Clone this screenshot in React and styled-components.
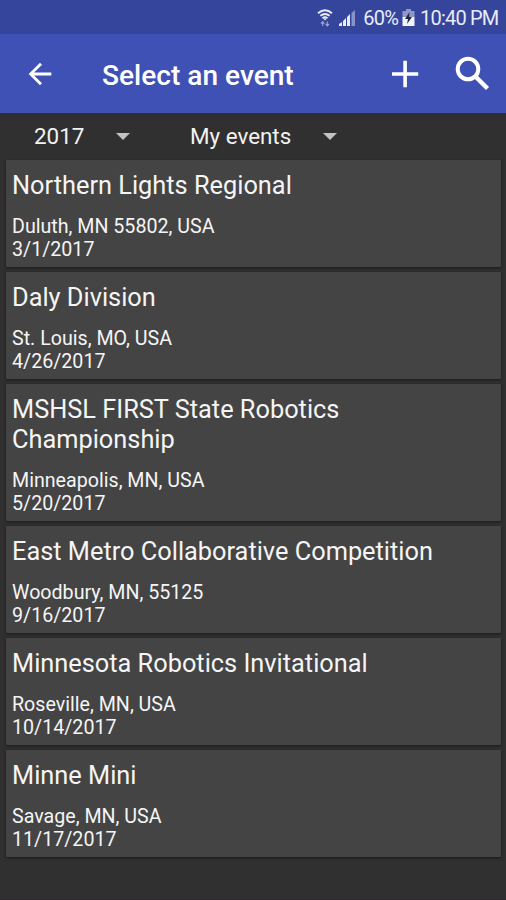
import React from 'react'
import styled, { createGlobalStyle } from 'styled-components'

const GlobalStyle = createGlobalStyle`
  * {
    box-sizing: border-box;
  }

  body {
    background: #303030;
    color: #fff;
    font-family: Roboto, 'Liberation Sans', sans-serif;
    margin: 0;
  }
`

const Screen = styled.div`
  background: #303030;
  border-bottom: 1px solid #30272e;
  display: flex;
  flex-direction: column;
  height: 900px;
  overflow: hidden;
  width: 506px;
`

const StatusBar = styled.div`
  align-items: center;
  background: #35459b;
  color: #e9ebf6;
  display: flex;
  flex: none;
  font-size: 20px;
  height: 34px;
  justify-content: flex-end;
  letter-spacing: -0.8px;
  padding: 2px 7.5px 0 0;
`

const StatusText = styled.span`
  margin-left: ${(props) => props.$gap}px;
  white-space: nowrap;
`

const StatusIcon = styled.svg`
  flex: none;
  margin-left: ${(props) => props.$gap || 0}px;
`

const Toolbar = styled.header`
  align-items: center;
  background: #3f51b5;
  display: flex;
  flex: none;
  height: 79px;
  padding: 0 16px 0 23px;
`

const ToolbarTitle = styled.h1`
  flex: 1;
  font-size: 28.1px;
  font-weight: 500;
  line-height: 32px;
  margin: 4px 0 0 45px;
`

const IconButton = styled.button`
  background: none;
  border: 0;
  color: inherit;
  display: flex;
  margin-left: ${(props) => props.$gap || 0}px;
  padding: 0;
`

const Filters = styled.div`
  align-items: center;
  color: #f2f2f2;
  display: flex;
  flex: none;
  font-size: 22.4px;
  height: 47.4px;
  padding: 0 0 1.5px 34px;
`

const Filter = styled.div`
  align-items: center;
  display: flex;
  justify-content: space-between;
  margin-right: 60px;
  width: ${(props) => props.$width}px;
`

const Caret = styled.span`
  border: 7px solid transparent;
  border-bottom: 0;
  border-top-color: #c3c3c3;
  height: 0;
  margin-top: 1px;
  width: 0;
`

const EventList = styled.main`
  display: flex;
  flex-direction: column;
  gap: 5.6px;
  padding: 0 5px 0 6px;
`

const Card = styled.article`
  background: #444;
  border-radius: 1px;
  box-shadow: 0 1px 3px rgba(0, 0, 0, 0.5);
  color: #f5f5f5;
  padding: 9.9px 6px 5.1px;
`

const EventName = styled.h2`
  font-size: 25.35px;
  font-weight: 400;
  line-height: 30px;
  margin: 0 0 15px;
  max-width: 450px;
`

const Detail = styled.p`
  font-size: 19.65px;
  line-height: 23.2px;
  margin: 0;
`

const events = [
  {
    name: 'Northern Lights Regional',
    place: 'Duluth, MN 55802, USA',
    date: '3/1/2017',
  },
  { name: 'Daly Division', place: 'St. Louis, MO, USA', date: '4/26/2017' },
  {
    name: 'MSHSL FIRST State Robotics Championship',
    place: 'Minneapolis, MN, USA',
    date: '5/20/2017',
  },
  {
    name: 'East Metro Collaborative Competition',
    place: 'Woodbury, MN, 55125',
    date: '9/16/2017',
  },
  {
    name: 'Minnesota Robotics Invitational',
    place: 'Roseville, MN, USA',
    date: '10/14/2017',
  },
  { name: 'Minne Mini', place: 'Savage, MN, USA', date: '11/17/2017' },
]

const WifiIcon = () => (
  <StatusIcon width="16" height="18" viewBox="0 0 16 18">
    <g fill="none" stroke="#e9ebf6" strokeWidth="1.9">
      <path d="M1 4.2Q8-1.8 15 4.2" />
      <path d="M3.4 6.8Q8 3 12.6 6.8" />
      <path d="M5.6 9.2Q8 7.2 10.4 9.2" />
    </g>
    <path d="M6.2 9.4h3.6L8 11.6z" fill="#e9ebf6" />
    <path
      d="M5.7 17v-4M4 14.6l1.7-1.9 1.7 1.9M10.3 12.5v4M8.6 15l1.7 1.9L12 15"
      fill="none"
      stroke="#9aa5d3"
      strokeWidth="1.2"
    />
  </StatusIcon>
)

const SignalIcon = () => (
  <StatusIcon $gap={6} width="17" height="18" viewBox="0 0 17 18">
    <path d="M0 17v-2l3-2v4zM4 17v-5l3-3v8zM8 17V8l3-3v12z" fill="#e9ebf6" />
    <path d="M12.5 17V4L16 1v16z" fill="#8793ca" />
  </StatusIcon>
)

const BatteryIcon = () => (
  <StatusIcon $gap={4} width="13" height="18" viewBox="0 0 13 18">
    <path d="M4 0h5v2h3.5v6H.5V2H4z" fill="#8d98c7" />
    <path d="M.5 8h12v9H.5z" fill="#f1f2fa" />
    <path d="M7.6 3L3 10h3l-1 5 5-7H7z" fill="#20253f" />
  </StatusIcon>
)

const App = () => {
  const renderEvent = (e) => (
    <Card key={e.name}>
      <EventName>{e.name}</EventName>
      <Detail>{e.place}</Detail>
      <Detail>{e.date}</Detail>
    </Card>
  )

  return (
    <Screen>
      <GlobalStyle />
      <StatusBar>
        <WifiIcon />
        <SignalIcon />
        <StatusText $gap={7}>60%</StatusText>
        <BatteryIcon />
        <StatusText $gap={5}>10:40 PM</StatusText>
      </StatusBar>
      <Toolbar>
        <IconButton aria-label="Back">
          <svg width="34" height="34" viewBox="0 0 24 24" fill="currentColor">
            <path d="M20 11H7.83l5.59-5.59L12 4l-8 8 8 8 1.41-1.41L7.83 13H20v-2z" />
          </svg>
        </IconButton>
        <ToolbarTitle>Select an event</ToolbarTitle>
        <IconButton aria-label="Add">
          <svg width="28" height="28" viewBox="0 0 28 28" fill="currentColor">
            <path d="M12.3 .8h3.6v11.4h11.3v3.6H15.9v11.4h-3.6V15.8H1v-3.6h11.3z" />
          </svg>
        </IconButton>
        <IconButton aria-label="Search" $gap={36}>
          <svg
            width="35"
            height="35"
            viewBox="0 0 35 35"
            fill="none"
            stroke="currentColor"
          >
            <circle cx="13" cy="13" r="10.3" strokeWidth="4" />
            <path d="M20 20l12.5 12.5" strokeWidth="4.4" />
          </svg>
        </IconButton>
      </Toolbar>
      <Filters>
        <Filter $width={96}>
          2017 <Caret />
        </Filter>
        <Filter $width={147}>
          My events <Caret />
        </Filter>
      </Filters>
      <EventList>{events.map(renderEvent)}</EventList>
    </Screen>
  )
}

export default App
